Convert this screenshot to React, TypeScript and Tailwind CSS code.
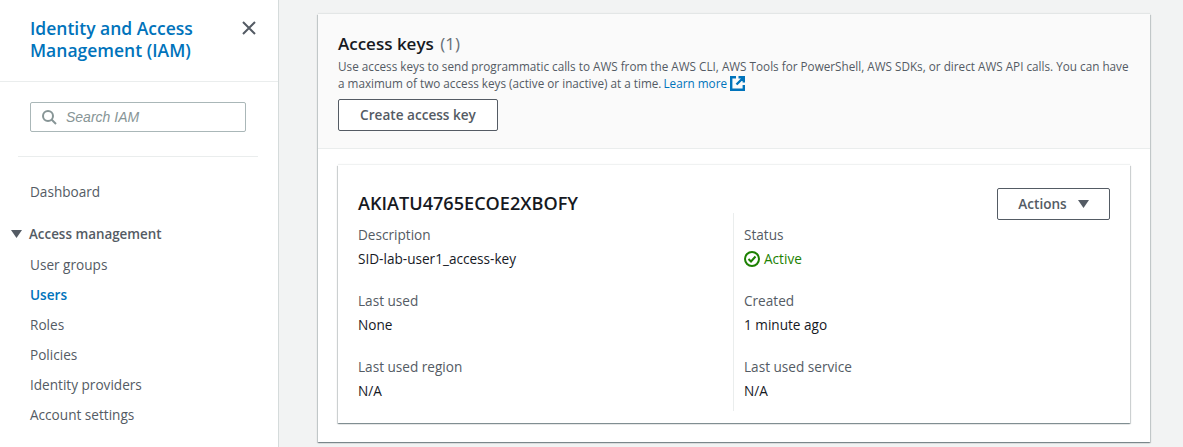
import React from 'react';

const navItems = ['User groups', 'Users', 'Roles', 'Policies', 'Identity providers', 'Account settings'];

const Field = ({ label, children }: { label: string; children: React.ReactNode }) => (
  <div className="h-[66px]">
    <div className="h-6 leading-6 text-[#545b64]">{label}</div>
    <div className="h-6 leading-6 text-[#16191f]">{children}</div>
  </div>
);

const App = () => {
  return (
    <div className="flex h-[447px] w-[1183px] overflow-hidden bg-[#f2f3f3] text-[13.6px] font-['Open_Sans','Noto_Sans',sans-serif]">
      {/* side nav */}
      <aside className="w-[279px] shrink-0 bg-white border-r border-[#d5dbdb] h-full">
        <div className="h-[82px] border-b border-[#eaeded] pl-[30px] pr-5 pt-[17px] flex justify-between">
          <h1 className="text-[17.5px] leading-[22px] font-semibold text-[#0073bb]">
            Identity and Access
            <br />
            Management (IAM)
          </h1>
          <svg width="16" height="16" viewBox="0 0 16 16" className="mt-[3px] mr-[1px]" fill="none" stroke="#545b64" strokeWidth="2">
            <path d="M2 2l12 12M14 2L2 14" />
          </svg>
        </div>
        <div className="pt-5 px-[30px]">
          <div className="w-[216px] h-[30px] border border-[#aab7b8] rounded-[2px] flex items-center pl-[10px]">
            <svg width="16" height="16" viewBox="0 0 16 16" fill="none" stroke="#879596" strokeWidth="2">
              <circle cx="7" cy="7" r="5" />
              <path d="M10.5 10.5L15 15" />
            </svg>
            <span className="ml-[9px] text-sm italic text-[#879596] font-['Liberation_Sans',sans-serif]">Search IAM</span>
          </div>
        </div>
        <div className="mx-[18px] mt-6 border-t border-[#eaeded] w-[240px]" />
        <nav className="text-[#545b64]">
          <div className="mt-[24px] pl-[30px] h-[22px] leading-[22px]">Dashboard</div>
          <div className="mt-[20px] h-[22px] flex items-center font-semibold text-[13.4px] pl-[11px]">
            <svg width="11" height="8" viewBox="0 0 11 8" fill="#545b64" className="mr-[7px]">
              <path d="M0 0h11L5.5 8z" />
            </svg>
            Access management
          </div>
          <ul className="mt-[5px] flex flex-col">
            {navItems.map((item) => (
              <li
                key={item}
                className={
                  item === 'Users'
                    ? 'pl-[30px] h-[30px] leading-[30px] font-semibold text-[#0073bb]'
                    : 'pl-[30px] h-[30px] leading-[30px]'
                }
              >
                {item}
              </li>
            ))}
          </ul>
        </nav>
      </aside>

      {/* main content */}
      <main className="flex-1 pl-[39px] pr-[33px] pt-[14px]">
        <section className="h-[428px] bg-white shadow-[0_1px_1px_0_rgba(0,28,36,0.3),1px_1px_1px_0_rgba(0,28,36,0.15),-1px_1px_1px_0_rgba(0,28,36,0.15),0_-1px_1px_0_rgba(0,28,36,0.06)]">
          <header className="h-[135px] bg-[#fafafa] border-b border-[#eaeded] px-5 pt-[18px]">
            <h2 className="text-[17px] leading-[24px] font-semibold text-[#16191f]">
              Access keys <span className="ml-[2px] font-normal text-[#687078]">(1)</span>
            </h2>
            <p className="mt-[2px] text-[11.73px] leading-[17px] text-[#545b64] whitespace-nowrap">
              Use access keys to send programmatic calls to AWS from the AWS CLI, AWS Tools for PowerShell, AWS SDKs, or direct AWS API calls. You can have
              <br />a maximum of two access keys (active or inactive) at a time.{' '}
              <span className="-ml-px text-[#0073bb]">Learn more</span>
              <svg width="15" height="15" viewBox="0 0 15 15" fill="none" stroke="#0073bb" strokeWidth="2.4" className="inline-block ml-[3px] align-[-3px]">
                <path d="M6 1.2H1.2v12.6h12.6V9M8.5 1.2h5.3v5.3M13.5 1.5L6.5 8.5" />
              </svg>
            </p>
            <button className="mt-[7px] h-[32px] w-[160px] border border-[#545b64] rounded-[2px] bg-white text-[#545b64] font-semibold">
              Create access key
            </button>
          </header>
          <div className="px-5 pt-4">
            <div className="h-[258px] bg-white px-5 pt-[23px] shadow-[0_1px_1px_0_rgba(0,28,36,0.3),1px_1px_1px_0_rgba(0,28,36,0.15),-1px_1px_1px_0_rgba(0,28,36,0.15),0_-1px_1px_0_rgba(0,28,36,0.06)]">
              <div className="flex justify-between">
                <h3 className="text-[18.1px] leading-[30px] font-semibold text-[#16191f]">AKIATU4765ECOE2XBOFY</h3>
                <button className="w-[113px] h-[32px] border border-[#545b64] rounded-[2px] bg-white text-[#545b64] font-semibold flex items-center justify-center">
                  Actions
                  <svg width="11" height="8" viewBox="0 0 11 8" fill="#545b64" className="ml-[11px]">
                    <path d="M0 0h11L5.5 8z" />
                  </svg>
                </button>
              </div>
              <div className="flex -mt-[7px]">
                <div className="w-[376px] pt-[10px] border-r border-[#eaeded]">
                  <Field label="Description">SID-lab-user1_access-key</Field>
                  <Field label="Last used">None</Field>
                  <div className="h-[56px]">
                    <div className="h-6 leading-6 text-[#545b64]">Last used region</div>
                    <div className="h-6 leading-6 text-[#16191f]">N/A</div>
                  </div>
                </div>
                <div className="pl-[10px] pt-[10px]">
                  <Field label="Status">
                    <span className="flex items-center text-[#1d8102]">
                      <svg width="16" height="16" viewBox="0 0 16 16" fill="none" stroke="#1d8102" strokeWidth="2" className="mr-[4px]">
                        <circle cx="8" cy="8" r="7" />
                        <path d="M4.5 8l2.5 2.5 4.5-5" />
                      </svg>
                      Active
                    </span>
                  </Field>
                  <Field label="Created">1 minute ago</Field>
                  <div className="h-[56px]">
                    <div className="h-6 leading-6 text-[#545b64]">Last used service</div>
                    <div className="h-6 leading-6 text-[#16191f]">N/A</div>
                  </div>
                </div>
              </div>
            </div>
          </div>
        </section>
      </main>
    </div>
  );
};

export default App;
